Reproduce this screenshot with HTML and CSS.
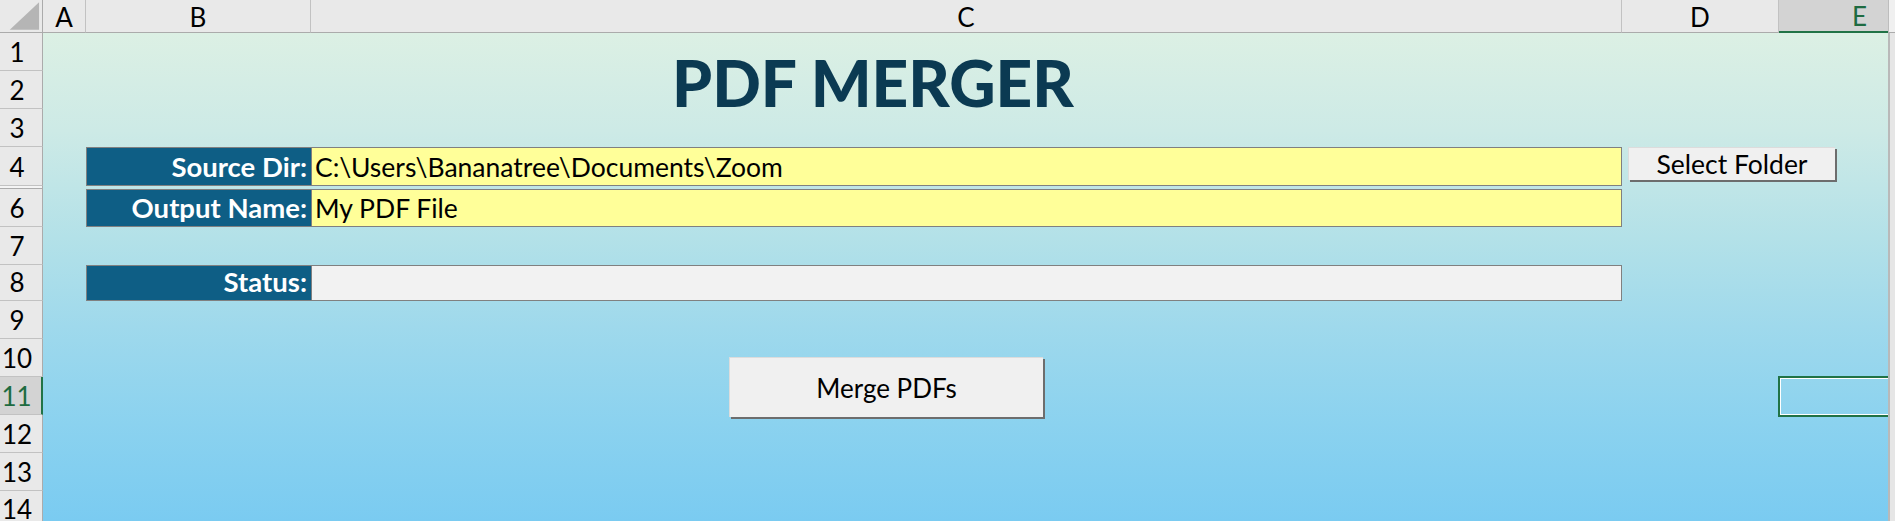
FILE: index.html
```html
<!DOCTYPE html>
<html>
<head>
<meta charset="utf-8">
<title>PDF Merger</title>
<link rel="stylesheet" href="styles.css">
</head>
<body>
<div class="sheet">
  <div class="corner">
    <svg class="corner-tri" width="43" height="33" viewBox="0 0 43 33"><polygon points="10,30 40,30 40,2" fill="#b5b5b5"/></svg>
  </div>
  <div class="colhead col-a">A</div>
  <div class="colhead col-b">B</div>
  <div class="colhead col-c">C</div>
  <div class="colhead col-d">D</div>
  <div class="colhead col-e is-active">E</div>
  <div class="scroll-top"></div>

  <div class="rowhead row-1">1</div>
  <div class="rowhead row-2">2</div>
  <div class="rowhead row-3">3</div>
  <div class="rowhead row-4">4</div>
  <div class="rowhead row-5"></div>
  <div class="rowhead row-6">6</div>
  <div class="rowhead row-7">7</div>
  <div class="rowhead row-8">8</div>
  <div class="rowhead row-9">9</div>
  <div class="rowhead row-10">10</div>
  <div class="rowhead row-11 is-active">11</div>
  <div class="rowhead row-12">12</div>
  <div class="rowhead row-13">13</div>
  <div class="rowhead row-14">14</div>

  <div class="fill"></div>
  <div class="scrollbar"></div>

  <div class="title">PDF MERGER</div>

  <div class="label row-4">Source Dir:</div>
  <div class="field input row-4">C:\Users\Bananatree\Documents\Zoom</div>

  <div class="label row-6">Output Name:</div>
  <div class="field input row-6">My PDF File</div>

  <div class="label row-8">Status:</div>
  <div class="field status row-8"></div>

  <div class="selection"></div>

  <button class="btn btn-folder">Select Folder</button>
  <button class="btn btn-merge">Merge PDFs</button>
</div>
</body>
</html>
```

FILE: styles.css
```css
html, body {
  margin: 0;
  padding: 0;
  overflow: hidden;
  background: #ffffff;
}

.sheet {
  position: relative;
  width: 1895px;
  height: 521px;
  display: grid;
  grid-template-columns: 43px 43px 225px 1311px 157px 109px 7px;
  grid-template-rows: 33px 38px 38px 38px 39px 3px 38px 38px 36px 38px 38px 38px 38px 38px 30px;
  font-family: "Lato", "Open Sans", sans-serif;
  color: #000;
  overflow: hidden;
}

/* ---------- headers ---------- */
.corner {
  grid-column: 1 / 2;
  grid-row: 1 / 2;
  background: #e9e9e9;
  border-right: 1px solid #ababab;
  border-bottom: 1px solid #ababab;
  box-sizing: border-box;
  display: flex;
}

.colhead {
  grid-row: 1 / 2;
  background: #e9e9e9;
  border-right: 1px solid #c2c2c2;
  border-bottom: 1px solid #ababab;
  box-sizing: border-box;
  display: flex;
  align-items: center;
  justify-content: center;
  font-size: 26px;
  line-height: 1;
  padding-top: 1px;
}

.col-a { grid-column: 2 / 3; }
.col-b { grid-column: 3 / 4; }
.col-c { grid-column: 4 / 5; }
.col-d { grid-column: 5 / 6; }
.col-e { grid-column: 6 / 7; padding-left: 52px; border-right: none; }

.colhead.is-active {
  background: #d3d3d3;
  color: #1e6b41;
  border-bottom: 2px solid #217346;
}

.scroll-top {
  grid-column: 7 / 8;
  grid-row: 1 / 2;
  background: #f0f0f0;
  border-left: 1px solid #bdbdbd;
  border-bottom: 1px solid #ababab;
}

.rowhead {
  grid-column: 1 / 2;
  background: #e9e9e9;
  border-right: 1px solid #ababab;
  border-bottom: 1px solid #c2c2c2;
  box-sizing: border-box;
  display: flex;
  align-items: flex-end;
  justify-content: center;
  padding-right: 8px;
  padding-bottom: 5px;
  font-size: 26px;
  line-height: 1;
}

.row-1 { grid-row: 2 / 3; }
.row-2 { grid-row: 3 / 4; }
.row-3 { grid-row: 4 / 5; }
.row-4 { grid-row: 5 / 6; }
.row-5 { grid-row: 6 / 7; }
.row-6 { grid-row: 7 / 8; }
.row-7 { grid-row: 8 / 9; }
.row-8 { grid-row: 9 / 10; }
.row-9 { grid-row: 10 / 11; }
.row-10 { grid-row: 11 / 12; }
.row-11 { grid-row: 12 / 13; }
.row-12 { grid-row: 13 / 14; }
.row-13 { grid-row: 14 / 15; }
.row-14 { grid-row: 15 / 16; }

.rowhead.row-14 {
  align-items: flex-start;
  padding-bottom: 0;
  padding-top: 5px;
  border-bottom: none;
}

.rowhead.row-5 {
  padding: 0;
  background: #f4f4f4;
  border-bottom: 1px solid #ababab;
}

.rowhead.is-active {
  background: #d3d3d3;
  color: #1e6b41;
  border-right: 2px solid #217346;
}

/* ---------- sheet area ---------- */
.fill {
  grid-column: 2 / 7;
  grid-row: 2 / 16;
  background: linear-gradient(180deg, #dcf0e4 0%, #cdeae6 20%, #b3e1e8 42%, #9fd9ec 60%, #8bd2ef 80%, #7acbf1 100%);
}

.scrollbar {
  grid-column: 7 / 8;
  grid-row: 2 / 16;
  background: #e6e6e6;
  border-left: 2px solid #b9b9b9;
}

.title {
  grid-column: 4 / 5;
  grid-row: 2 / 4;
  align-self: end;
  padding-left: 361px;
  margin-bottom: -6px;
  font-family: "Lato", sans-serif;
  font-weight: 900;
  font-size: 64px;
  line-height: 1;
  color: #0b3a52;
}

.label {
  grid-column: 3 / 4;
  background: #0e5e85;
  color: #ffffff;
  font-weight: 700;
  font-size: 27.5px;
  line-height: 1;
  display: flex;
  align-items: flex-end;
  justify-content: flex-end;
  padding: 0 4px 5px 0;
  border: 1px solid #808080;
  border-right: none;
  box-sizing: border-box;
}

.field {
  grid-column: 4 / 5;
  font-size: 26.5px;
  line-height: 1;
  display: flex;
  align-items: flex-end;
  padding: 0 0 5px 3px;
  border: 1px solid #808080;
  box-sizing: border-box;
}

.input { background: #ffff99; }
.status { background: #f2f2f2; }

.selection {
  grid-column: 6 / 7;
  grid-row: 12 / 13;
  margin: -1px 0 -2px -1px;
  border: 2px solid #217346;
  border-right: none;
  box-shadow: inset 1px 1px 0 #ffffff, inset 0 -1px 0 #ffffff;
}

/* ---------- buttons (floating shapes) ---------- */
.btn {
  position: absolute;
  margin: 0;
  padding: 0;
  background: #f0f0f0;
  border: none;
  border-top: 1px solid #dcdcdc;
  border-left: 1px solid #dcdcdc;
  box-shadow: 2px 2px 0 #6d6d6d;
  font-family: "Lato", "Open Sans", sans-serif;
  color: #000;
  line-height: 1;
  cursor: pointer;
}

.btn-folder {
  left: 1628px;
  top: 147px;
  width: 207px;
  height: 33px;
  font-size: 26.5px;
}

.btn-merge {
  left: 729px;
  top: 357px;
  width: 314px;
  height: 60px;
  font-size: 26px;
}
```
